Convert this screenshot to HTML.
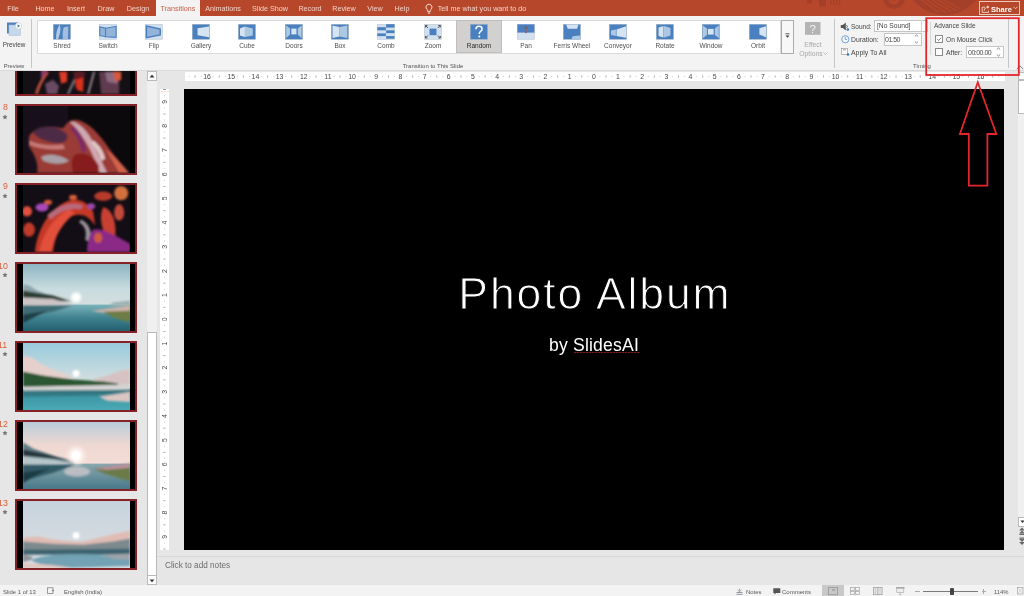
<!DOCTYPE html><html><head><meta charset="utf-8"><style>
*{margin:0;padding:0;box-sizing:border-box}
html,body{width:1024px;height:596px;overflow:hidden;background:#e6e6e6;font-family:"Liberation Sans", sans-serif}
.b{position:absolute}
.t{position:absolute;white-space:nowrap;line-height:1.2;font-family:"Liberation Sans", sans-serif;will-change:transform}
svg{position:absolute;overflow:visible}
</style></head><body>

<div class="b" style="left:0px;top:0px;width:1024px;height:16px;background:#b7472a"></div>
<svg style="left:0;top:0" width="1024" height="16"><g fill="#a4402a"><circle cx="944.5" cy="-25.2" r="40.4"/><circle cx="894" cy="-2.3" r="11.1"/><path d="M806.5 0h6l-1 3.5h-4z"/><path d="M818.5 0h7.5v6.6h-6.5z"/><rect x="830" y="0" width="1.3" height="5"/><rect x="833" y="0" width="1.3" height="5"/><rect x="836" y="0" width="1.3" height="5"/><rect x="839" y="0" width="1.3" height="4.5"/></g><circle cx="894" cy="-1.3" r="5.6" fill="#b7472a"/><circle cx="894" cy="-2.5" r="3" fill="#a4402a"/><g stroke="#b7472a" stroke-width="1.1"><line x1="920" y1="-1" x2="939" y2="12.5"/><line x1="925.5" y1="-1" x2="945.5" y2="12.5"/><line x1="931" y1="-1" x2="951" y2="11.5"/><line x1="936.5" y1="-1" x2="956" y2="10.5"/><line x1="942" y1="-1" x2="960" y2="8.5"/></g></svg>
<div class="t" style="left:-487.15px;width:1000px;text-align:center;top:5.08px;font-size:7.2px;color:#f0d2c8;">File</div>
<div class="t" style="left:-454.6px;width:1000px;text-align:center;top:5.08px;font-size:7.2px;color:#f0d2c8;">Home</div>
<div class="t" style="left:-423.8px;width:1000px;text-align:center;top:5.08px;font-size:7.2px;color:#f0d2c8;">Insert</div>
<div class="t" style="left:-394.0px;width:1000px;text-align:center;top:5.08px;font-size:7.2px;color:#f0d2c8;">Draw</div>
<div class="t" style="left:-362.5px;width:1000px;text-align:center;top:5.08px;font-size:7.2px;color:#f0d2c8;">Design</div>
<div class="t" style="left:-276.8px;width:1000px;text-align:center;top:5.08px;font-size:7.2px;color:#f0d2c8;">Animations</div>
<div class="t" style="left:-230.25px;width:1000px;text-align:center;top:5.08px;font-size:7.2px;color:#f0d2c8;">Slide Show</div>
<div class="t" style="left:-190.14999999999998px;width:1000px;text-align:center;top:5.08px;font-size:7.2px;color:#f0d2c8;">Record</div>
<div class="t" style="left:-156.35000000000002px;width:1000px;text-align:center;top:5.08px;font-size:7.2px;color:#f0d2c8;">Review</div>
<div class="t" style="left:-125.39999999999998px;width:1000px;text-align:center;top:5.08px;font-size:7.2px;color:#f0d2c8;">View</div>
<div class="t" style="left:-97.69999999999999px;width:1000px;text-align:center;top:5.08px;font-size:7.2px;color:#f0d2c8;">Help</div>
<div class="t" style="left:-18.149999999999977px;width:1000px;text-align:center;top:5.08px;font-size:7.2px;color:#f0d2c8;">Tell me what you want to do</div>
<div class="b" style="left:155.5px;top:0px;width:44px;height:16px;background:#f3f3f3"></div>
<div class="t" style="left:-322.5px;width:1000px;text-align:center;top:5.08px;font-size:7.2px;color:#c8604a;">Transitions</div>
<svg style="left:424px;top:3px" width="10" height="12"><path d="M5 1.2a3 3 0 0 1 1.9 5.3c-.5.4-.7.9-.7 1.5v.8H3.8V8c0-.6-.2-1.1-.7-1.5A3 3 0 0 1 5 1.2z" fill="none" stroke="#fbe9e4" stroke-width=".9"/><line x1="4" y1="10.2" x2="6" y2="10.2" stroke="#fbe9e4" stroke-width=".9"/></svg>
<div class="b" style="left:979px;top:1.2px;width:41px;height:13.4px;border:1px solid #f0c9bd"></div>
<svg style="left:981px;top:4px" width="9" height="9"><path d="M4 3.2H1.2v5.2h6.3V6.6" fill="none" stroke="#f6ddd5" stroke-width=".85"/><path d="M3.2 6.6C3.6 4.2 5 3 7 3" fill="none" stroke="#f6ddd5" stroke-width=".85"/><path d="M6.2 1.2L8.4 3 6.2 4.8z" fill="#f6ddd5"/></svg>
<div class="t" style="left:991px;top:4.70px;font-size:7.5px;color:#fff;font-weight:bold">Share</div>
<svg style="left:1013px;top:6px" width="5" height="4"><path d="M.5 .8L2.5 2.8 4.5 .8" fill="none" stroke="#f6ddd5" stroke-width=".8"/></svg>
<div class="b" style="left:0px;top:16px;width:1024px;height:54px;background:#f3f3f3"></div>
<div class="b" style="left:0px;top:70px;width:1024px;height:1px;background:#dadada"></div>
<svg style="left:6px;top:21px" width="18" height="16"><rect x="1" y="1.5" width="11" height="11" fill="#4f81bd"/><rect x="3" y="4" width="11.5" height="10.5" fill="#c5d8ea" stroke="#a9c0d6" stroke-width=".5"/><circle cx="12.5" cy="5" r="3.2" fill="#fff" stroke="#bdbdbd" stroke-width=".5"/><path d="M11.6 3.3l2.6 1.7-2.6 1.7z" fill="#3a8f8f"/></svg>
<div class="t" style="left:-485.9px;width:1000px;text-align:center;top:40.86px;font-size:6.4px;color:#444;">Preview</div>
<div class="t" style="left:-486.2px;width:1000px;text-align:center;top:62.52px;font-size:5.8px;color:#555;">Preview</div>
<div class="b" style="left:31px;top:19.3px;width:1px;height:48.5px;background:#c6c6c6"></div>
<div class="b" style="left:37.3px;top:20.2px;width:744px;height:34px;background:#fff;border:1px solid #d9d9d9"></div>
<div class="b" style="left:455.6px;top:20.4px;width:46px;height:32.2px;background:#d3d0d0;border:1px solid #c1bebe"></div>
<div class="b" style="left:781px;top:20px;width:13.2px;height:33.6px;background:#f7f7f7;border:1px solid #acacac"></div>
<svg style="left:784px;top:33px" width="7" height="6"><line x1="1.5" y1="0.8" x2="5.5" y2="0.8" stroke="#444" stroke-width=".9"/><path d="M1.5 2.5h4l-2 2.3z" fill="#444"/></svg>
<svg style="left:52.6px;top:23.9px" width="17.8" height="15.6" viewBox="0 0 18 15.6" preserveAspectRatio="none"><rect x="0.25" y="0.25" width="17.5" height="15.1" fill="#4a80bf" stroke="#a5b3c2" stroke-width=".5"/><path d="M6.6 .6C8.2 3.5 7.6 8.5 5.2 14.9H3.2C2.8 10.5 3.8 5.5 6.6 .6z" fill="#b4cae4"/><path d="M10.8 3.2L15.6 2.4 15.2 14.9H10C9.4 10.5 9.8 6.5 10.8 3.2z" fill="#9fbbdd"/><path d="M11.5 5h3M11 8h3.5M10.8 11h3.8" stroke="#c8daf0" stroke-width=".6" stroke-dasharray="1 .8"/></svg>
<div class="t" style="left:-438.5px;width:1000px;text-align:center;top:42.40px;font-size:6.5px;color:#505050;">Shred</div>
<svg style="left:99.0px;top:23.9px" width="17.8" height="15.6" viewBox="0 0 18 15.6" preserveAspectRatio="none"><rect x="0.25" y="0.25" width="17.5" height="15.1" fill="#d0e0ef" stroke="#b9c3cc" stroke-width=".5"/><path d="M.8 2.9L6.6 4.3V12.7L.8 11.6z" fill="#93b3d8" stroke="#4a80bf" stroke-width="1.1"/><path d="M6.6 4.3L17.3 2.3V13.4L6.6 12.7z" fill="#93b3d8" stroke="#4a80bf" stroke-width="1.1"/></svg>
<div class="t" style="left:-392.1px;width:1000px;text-align:center;top:42.40px;font-size:6.5px;color:#505050;">Switch</div>
<svg style="left:145.4px;top:23.9px" width="17.8" height="15.6" viewBox="0 0 18 15.6" preserveAspectRatio="none"><rect x="0.25" y="0.25" width="17.5" height="15.1" fill="#d0e0ef" stroke="#b9c3cc" stroke-width=".5"/><path d="M1.4 1.9L15.4 5V10.9L1.4 13.7z" fill="#93b3d8" stroke="#4a80bf" stroke-width="1.5"/></svg>
<div class="t" style="left:-345.7px;width:1000px;text-align:center;top:42.40px;font-size:6.5px;color:#505050;">Flip</div>
<svg style="left:191.8px;top:23.9px" width="17.8" height="15.6" viewBox="0 0 18 15.6" preserveAspectRatio="none"><rect x="0.25" y="0.25" width="17.5" height="15.1" fill="#4a80bf" stroke="#a5b3c2" stroke-width=".5"/><path d="M5.6 4.2L17.4 2.4V13.3L5.6 11.3z" fill="#d6e3f0"/></svg>
<div class="t" style="left:-299.3px;width:1000px;text-align:center;top:42.40px;font-size:6.5px;color:#505050;">Gallery</div>
<svg style="left:238.2px;top:23.9px" width="17.8" height="15.6" viewBox="0 0 18 15.6" preserveAspectRatio="none"><rect x="0.25" y="0.25" width="17.5" height="15.1" fill="#4a80bf" stroke="#a5b3c2" stroke-width=".5"/><path d="M2 4.4L7 2.4V13.1L2 11.4z" fill="#d6e3f0"/><path d="M7 2.4l8 2v7L7 13.1z" fill="#adc8e3"/></svg>
<div class="t" style="left:-252.9px;width:1000px;text-align:center;top:42.40px;font-size:6.5px;color:#505050;">Cube</div>
<svg style="left:284.6px;top:23.9px" width="17.8" height="15.6" viewBox="0 0 18 15.6" preserveAspectRatio="none"><rect x="0.25" y="0.25" width="17.5" height="15.1" fill="#4a80bf" stroke="#a5b3c2" stroke-width=".5"/><path d="M1.2 1.4L5 4.6v6L1.2 13.9z" fill="#adc8e3"/><path d="M16.8 1.4L13 4.6v6l3.8 3.3z" fill="#adc8e3"/><rect x="6.4" y="4.6" width="5.2" height="5.8" fill="#d6e3f0"/></svg>
<div class="t" style="left:-206.5px;width:1000px;text-align:center;top:42.40px;font-size:6.5px;color:#505050;">Doors</div>
<svg style="left:331.0px;top:23.9px" width="17.8" height="15.6" viewBox="0 0 18 15.6" preserveAspectRatio="none"><rect x="0.25" y="0.25" width="17.5" height="15.1" fill="#4a80bf" stroke="#a5b3c2" stroke-width=".5"/><path d="M1.5 1.5L8.5 3v9.6L1.5 14z" fill="#d6e3f0"/><path d="M8.5 3l8-1.5V14l-8-1.4z" fill="#adc8e3"/></svg>
<div class="t" style="left:-160.10000000000002px;width:1000px;text-align:center;top:42.40px;font-size:6.5px;color:#505050;">Box</div>
<svg style="left:377.4px;top:23.9px" width="17.8" height="15.6" viewBox="0 0 18 15.6" preserveAspectRatio="none"><rect x="0.25" y="0.25" width="17.5" height="15.1" fill="#d0e0ef" stroke="#b9c3cc" stroke-width=".5"/><rect x="9.2" y="0.2" width="8.5" height="3.4" fill="#4a80bf"/><rect x="0.3" y="3.2" width="8.7" height="3.1" fill="#4a80bf"/><rect x="9.2" y="6.3" width="8.5" height="2.8" fill="#4a80bf"/><rect x="0.3" y="9.4" width="8.7" height="2.7" fill="#4a80bf"/><rect x="9.2" y="12.1" width="8.5" height="2.6" fill="#4a80bf"/></svg>
<div class="t" style="left:-113.69999999999999px;width:1000px;text-align:center;top:42.40px;font-size:6.5px;color:#505050;">Comb</div>
<svg style="left:423.8px;top:23.9px" width="17.8" height="15.6" viewBox="0 0 18 15.6" preserveAspectRatio="none"><rect x="0.25" y="0.25" width="17.5" height="15.1" fill="#d0e0ef" stroke="#b9c3cc" stroke-width=".5"/><rect x="5.6" y="4.6" width="7" height="6.6" fill="#4a80bf"/><g stroke="#555" stroke-width="1" fill="none"><path d="M1.5 1.5l2.5 2.5M1.5 1.5h2M1.5 1.5v2M16.5 1.5L14 4M16.5 1.5h-2M16.5 1.5v2M1.5 14l2.5-2.5M1.5 14h2M1.5 14v-2M16.5 14L14 11.5M16.5 14h-2M16.5 14v-2"/></g></svg>
<div class="t" style="left:-67.30000000000001px;width:1000px;text-align:center;top:42.40px;font-size:6.5px;color:#505050;">Zoom</div>
<svg style="left:470.2px;top:23.9px" width="17.8" height="15.6" viewBox="0 0 18 15.6" preserveAspectRatio="none"><rect x="0.25" y="0.25" width="17.5" height="15.1" fill="#4a80bf" stroke="#a5b3c2" stroke-width=".5"/><path d="M6 5.3c0-1.9 1.4-3 3.1-3 1.8 0 3.1 1.1 3.1 2.7 0 1.4-.9 2-1.7 2.6-.7.5-1.1 1-1.1 1.9v.6" fill="none" stroke="#fff" stroke-width="1.5"/><circle cx="9.4" cy="12.4" r="1" fill="#fff"/></svg>
<div class="t" style="left:-20.900000000000034px;width:1000px;text-align:center;top:42.40px;font-size:6.5px;color:#2b2b2b;">Random</div>
<svg style="left:516.6px;top:23.9px" width="17.8" height="15.6" viewBox="0 0 18 15.6" preserveAspectRatio="none"><rect x="0.25" y="0.25" width="17.5" height="15.1" fill="#d0e0ef" stroke="#b9c3cc" stroke-width=".5"/><rect x="0.4" y="0.4" width="17.2" height="8.2" fill="#4a80bf"/><path d="M9 1.8l2.6 2.6h-1.8v4.6H8.2V4.4H6.4z" fill="#6a6a6a"/><rect x="8.5" y="4.4" width="1" height="5" fill="#b05a7a"/></svg>
<div class="t" style="left:25.5px;width:1000px;text-align:center;top:42.40px;font-size:6.5px;color:#505050;">Pan</div>
<svg style="left:563.0px;top:23.9px" width="17.8" height="15.6" viewBox="0 0 18 15.6" preserveAspectRatio="none"><rect x="0.25" y="0.25" width="17.5" height="15.1" fill="#4a80bf" stroke="#a5b3c2" stroke-width=".5"/><path d="M3.2 .4h12.5l-1.5 4.4H4.8z" fill="#d6e3f0"/><path d="M8.6 15.3l1.2-3.1 7.8-.6v3.7z" fill="#adc8e3"/></svg>
<div class="t" style="left:71.89999999999998px;width:1000px;text-align:center;top:42.40px;font-size:6.5px;color:#505050;">Ferris Wheel</div>
<svg style="left:609.4px;top:23.9px" width="17.8" height="15.6" viewBox="0 0 18 15.6" preserveAspectRatio="none"><rect x="0.25" y="0.25" width="17.5" height="15.1" fill="#4a80bf" stroke="#a5b3c2" stroke-width=".5"/><path d="M2 6.6l5-1.1v6.4l-5-.9z" fill="#adc8e3"/><path d="M7.6 5.5l9.8-3.3V13.8l-9.8-1.9z" fill="#d6e3f0"/></svg>
<div class="t" style="left:118.29999999999995px;width:1000px;text-align:center;top:42.40px;font-size:6.5px;color:#505050;">Conveyor</div>
<svg style="left:655.8px;top:23.9px" width="17.8" height="15.6" viewBox="0 0 18 15.6" preserveAspectRatio="none"><rect x="0.25" y="0.25" width="17.5" height="15.1" fill="#4a80bf" stroke="#a5b3c2" stroke-width=".5"/><path d="M2.6 3.6L7.6 2v11.5l-5-1.6z" fill="#d6e3f0"/><path d="M8.1 2l6.5 2v7.6l-6.5 2z" fill="#adc8e3"/></svg>
<div class="t" style="left:164.69999999999993px;width:1000px;text-align:center;top:42.40px;font-size:6.5px;color:#505050;">Rotate</div>
<svg style="left:702.2px;top:23.9px" width="17.8" height="15.6" viewBox="0 0 18 15.6" preserveAspectRatio="none"><rect x="0.25" y="0.25" width="17.5" height="15.1" fill="#4a80bf" stroke="#a5b3c2" stroke-width=".5"/><path d="M1 1.4L5 4.5v6.5L1 14z" fill="#adc8e3"/><path d="M17 1.4L13 4.5v6.5l4 3z" fill="#adc8e3"/><rect x="6" y="4.9" width="5.8" height="5.7" fill="#d6e3f0"/></svg>
<div class="t" style="left:211.10000000000002px;width:1000px;text-align:center;top:42.40px;font-size:6.5px;color:#505050;">Window</div>
<svg style="left:748.6px;top:23.9px" width="17.8" height="15.6" viewBox="0 0 18 15.6" preserveAspectRatio="none"><rect x="0.25" y="0.25" width="17.5" height="15.1" fill="#4a80bf" stroke="#a5b3c2" stroke-width=".5"/><path d="M10.5 4.3L17.2 2.3V13.3L10.5 10.6z" fill="#d6e3f0"/></svg>
<div class="t" style="left:257.5px;width:1000px;text-align:center;top:42.40px;font-size:6.5px;color:#505050;">Orbit</div>
<div class="t" style="left:-67px;width:1000px;text-align:center;top:62.50px;font-size:6px;color:#555;">Transition to This Slide</div>
<svg style="left:805px;top:22px" width="16" height="13"><rect width="15.5" height="12.8" fill="#b4b4b4"/><text x="7.8" y="11" font-size="11.5" fill="#f4f4f4" text-anchor="middle" font-family="Liberation Sans">?</text></svg>
<div class="t" style="left:312.5px;width:1000px;text-align:center;top:40.62px;font-size:6.8px;color:#a8a8a8;">Effect</div>
<div class="t" style="left:311px;width:1000px;text-align:center;top:49.72px;font-size:6.8px;color:#a8a8a8;">Options</div>
<svg style="left:823px;top:52px" width="5" height="3"><path d="M.5 .5l2 2 2-2" fill="none" stroke="#a8a8a8" stroke-width=".7"/></svg>
<div class="b" style="left:833.5px;top:19.3px;width:1px;height:48.7px;background:#c6c6c6"></div>
<svg style="left:840px;top:22px" width="10" height="9"><path d="M.8 3h2l3-2.5v8l-3-2.5h-2z" fill="#555"/><path d="M6.5 3a2 2 0 0 1 0 3" fill="none" stroke="#555" stroke-width=".8"/><circle cx="7.8" cy="7.5" r="1.3" fill="#2e75c8"/></svg>
<div class="t" style="left:851px;top:22.70px;font-size:6.5px;color:#444;">Sound:</div>
<div class="b" style="left:874.3px;top:19.5px;width:54px;height:12.1px;background:#fff;border:1px solid #c6c6c6"></div>
<div class="b" style="left:921px;top:19.5px;width:1px;height:12.1px;background:#d4d4d4"></div>
<div class="t" style="left:876.5px;top:22.28px;font-size:6.7px;color:#444;">[No Sound]</div>
<svg style="left:841px;top:35px" width="9" height="9"><circle cx="4.3" cy="4.3" r="3.6" fill="none" stroke="#4f8fd0" stroke-width=".8"/><path d="M4.3 2v2.5h1.8" fill="none" stroke="#4f8fd0" stroke-width=".7"/></svg>
<div class="t" style="left:851px;top:35.82px;font-size:6.8px;color:#444;">Duration:</div>
<div class="b" style="left:883.6px;top:32.6px;width:38px;height:13.1px;background:#fff;border:1px solid #c6c6c6"></div>
<div class="t" style="left:884.8px;top:35.50px;font-size:7px;color:#4a4a4a;letter-spacing:-0.5px">01.50</div>
<svg style="left:914px;top:34px" width="5" height="10"><path d="M.8 2.5l1.7-1.6 1.7 1.6M.8 7.5l1.7 1.6 1.7-1.6" fill="none" stroke="#555" stroke-width=".7"/></svg>
<svg style="left:841px;top:48px" width="9" height="8"><rect x=".5" y=".5" width="6" height="6" fill="#fff" stroke="#8a8a8a" stroke-width=".6"/><rect x="2" y=".5" width="3" height="2" fill="#bbb"/><circle cx="7" cy="6.5" r="1.2" fill="#2e75c8"/></svg>
<div class="t" style="left:851px;top:49.16px;font-size:6.9px;color:#444;">Apply To All</div>
<div class="t" style="left:422px;width:1000px;text-align:center;top:62.50px;font-size:6px;color:#555;">Timing</div>
<div class="b" style="left:930.3px;top:22.3px;width:1px;height:33px;background:#d6d6d6"></div>
<div class="t" style="left:933.5px;top:22.20px;font-size:6.5px;color:#444;">Advance Slide</div>
<div class="b" style="left:935.1px;top:35.1px;width:7.5px;height:7.5px;background:#fff;border:1px solid #8c8c8c"></div>
<svg style="left:936px;top:36px" width="6" height="6"><path d="M1.2 3.2l1.4 1.3L5.1 1.8" fill="none" stroke="#555" stroke-width=".75"/></svg>
<div class="t" style="left:945.7px;top:36.24px;font-size:6.6px;color:#444;">On Mouse Click</div>
<div class="b" style="left:935.1px;top:48.1px;width:7.5px;height:7.6px;background:#fff;border:1px solid #8c8c8c"></div>
<div class="t" style="left:945.7px;top:49.22px;font-size:6.8px;color:#444;">After:</div>
<div class="b" style="left:966.1px;top:45.6px;width:37.7px;height:12.9px;background:#fff;border:1px solid #c6c6c6"></div>
<div class="t" style="left:967.8px;top:48.60px;font-size:7px;color:#4a4a4a;letter-spacing:-0.5px">00:00.00</div>
<svg style="left:996.2px;top:47.3px" width="5" height="10"><path d="M.8 2.5l1.7-1.6 1.7 1.6M.8 7.5l1.7 1.6 1.7-1.6" fill="none" stroke="#555" stroke-width=".7"/></svg>
<div class="b" style="left:1008.3px;top:19px;width:1px;height:48.7px;background:#c6c6c6"></div>
<svg style="left:1016px;top:64.5px" width="8" height="5"><path d="M.8 4l3.2-3 3.2 3" fill="none" stroke="#666" stroke-width=".8"/></svg>
<div class="b" style="left:146.7px;top:71px;width:10px;height:514px;background:#f0f0f0"></div>
<div class="b" style="left:146.7px;top:71px;width:10px;height:9.5px;background:#fff;border:1px solid #b9b9b9"></div>
<svg style="left:149px;top:73.5px" width="6" height="4"><path d="M.5 3.5L3 .8l2.5 2.7z" fill="#333"/></svg>
<div class="b" style="left:146.7px;top:332px;width:10px;height:243.5px;background:#fff;border:1px solid #b9b9b9"></div>
<div class="b" style="left:146.7px;top:575px;width:10px;height:10px;background:#fff;border:1px solid #b9b9b9"></div>
<svg style="left:149px;top:578.5px" width="6" height="4"><path d="M.5 .5L3 3.2l2.5-2.7z" fill="#333"/></svg>
<div class="b" style="left:0;top:71px;width:146px;height:514px;overflow:hidden">
<svg width="0" height="0" style="position:absolute"><filter id="bl" x="-20%" y="-20%" width="140%" height="140%"><feGaussianBlur stdDeviation="0.8"/></filter></svg>
<div class="b" style="left:14.7px;top:-46.2px;width:122.8px;height:71px;border:2px solid #862227;background:#000"></div>
<svg style="left:22.75px;top:-44.2px;overflow:hidden" width="107.2" height="67" viewBox="0 0 107 66" preserveAspectRatio="none"><rect width="107" height="66" fill="#141016"/><g filter="url(#bl)"><path d="M12 66 C14 58 18 50 24 44 L26 45 C21 51 17 58 15 66Z" fill="#c0503a"/><path d="M18 40 C22 36 26 38 24 44 L18 52Z" fill="#8a3a6a"/><path d="M22 56 L30 52 L36 58 L34 66 L24 66Z" fill="#6a4a64"/><path d="M36 44 L44 44 L44 54 L38 56Z" fill="#e03a28"/><path d="M44 66 L54 44 L56 44 L46 66Z" fill="#8a8a90"/><path d="M50 44 L62 44 L60 62 L52 60Z" fill="#5a1a20"/><path d="M52 52 L60 50 L60 64 L54 62Z" fill="#d8301e"/><path d="M64 66 L70 44 L72 44 L66 66Z" fill="#9a8890"/><path d="M76 44 L96 44 L96 66 L78 66Z" fill="#5e3a4e"/><path d="M82 44 L96 44 L94 56 L84 54Z" fill="#8a6a80"/><path d="M90 44 L98 44 L98 52 L92 54Z" fill="#d8583a"/></g></svg>
<div class="b" style="left:14.7px;top:32.8px;width:122.8px;height:71px;border:2px solid #862227;background:#000"></div>
<svg style="left:22.75px;top:34.8px;overflow:hidden" width="107.2" height="67" viewBox="0 0 107 66" preserveAspectRatio="none"><rect width="107" height="66" fill="#0c090d"/><rect width="45" height="66" fill="#17101a"/><g filter="url(#bl)"><path d="M6 30 C10 22 24 18 40 22 C44 16 48 12 56 14 C68 18 78 30 86 42 C94 52 100 60 106 66 L14 66 C16 58 12 48 6 40 Z" fill="#9a3a36"/><path d="M10 26 C16 18 34 18 44 28 C46 34 40 38 30 36 C22 34 14 32 10 26 Z" fill="#4d2c44"/><path d="M46 15 C56 15 66 26 72 40 C76 50 80 58 84 66 L77 66 C73 56 69 46 63 36 C57 26 52 20 46 15Z" fill="#d0a8b0"/><path d="M49 20 C57 24 61 34 63 44 L59 46 C57 36 53 28 47 22Z" fill="#7a2a6a"/><path d="M6 34 C14 38 28 40 40 38 L42 42 C30 44 14 42 6 38Z" fill="#c87a78"/><path d="M18 50 C26 46 38 48 46 54 C40 58 30 58 20 54Z" fill="#a8a0a6"/><path d="M52 48 C62 44 72 50 76 60 L74 66 L50 66 C48 58 48 52 52 48Z" fill="#861c1c"/><path d="M82 42 C90 48 99 57 106 66 L96 66 C92 58 87 50 82 42Z" fill="#d2644c"/><path d="M70 34 C76 38 80 44 82 52 L78 54 C76 46 72 40 68 36Z" fill="#e0c8c8"/></g></svg>
<div class="t" style="left:2.5px;top:31.4px;font-size:8.8px;color:#d9603f">8</div>
<svg style="left:2px;top:42.8px" width="6" height="6"><path d="M3 .5l.8 1.6 1.7.2-1.2 1.2.3 1.7L3 4.4l-1.6.8.3-1.7L.5 2.3l1.7-.2z" fill="#777"/></svg>
<div class="b" style="left:14.7px;top:111.80000000000001px;width:122.8px;height:71px;border:2px solid #862227;background:#000"></div>
<svg style="left:22.75px;top:113.80000000000001px;overflow:hidden" width="107.2" height="67" viewBox="0 0 107 66" preserveAspectRatio="none"><rect width="107" height="66" fill="#130d15"/><g filter="url(#bl)"><path d="M12 66 C14 44 26 24 44 16 C54 12 64 16 70 26 L72 40 C66 30 58 28 50 30 C38 34 32 50 30 66Z" fill="#c43828"/><path d="M16 66 C20 48 30 32 46 24 L52 28 C40 36 32 50 28 66Z" fill="#e2503a"/><path d="M24 30 C34 20 48 16 60 20 L58 24 C48 22 36 26 28 34Z" fill="#b86a7a"/><path d="M58 34 C66 38 70 46 66 56 L62 54 C64 46 62 40 56 37Z" fill="#9a929a"/><ellipse cx="19" cy="22" rx="6.5" ry="4" fill="#a848b8"/><ellipse cx="25" cy="17" rx="4" ry="2.5" fill="#d85a3a"/><ellipse cx="98" cy="8" rx="7" ry="7" fill="#d2703e"/><ellipse cx="80" cy="11" rx="9" ry="4.5" fill="#b83a2c"/><path d="M80 22 C90 24 94 38 92 54 C88 58 84 56 82 50 C78 40 76 30 80 22Z" fill="#c84030"/><ellipse cx="96" cy="27" rx="5" ry="8" fill="#c24a3a"/><path d="M70 44 C80 42 92 50 107 58 L107 66 L64 66 C64 56 66 48 70 44Z" fill="#8a2a86"/><ellipse cx="75" cy="52" rx="4" ry="5" fill="#d05a40"/><ellipse cx="4" cy="26" rx="5" ry="5" fill="#e05040"/><ellipse cx="6" cy="44" rx="6" ry="7" fill="#c03a2a"/><ellipse cx="50" cy="12" rx="4" ry="2.5" fill="#d8603a"/><ellipse cx="68" cy="21" rx="4" ry="3" fill="#9a48a8"/></g></svg>
<div class="t" style="left:2.5px;top:110.4px;font-size:8.8px;color:#d9603f">9</div>
<svg style="left:2px;top:121.80000000000001px" width="6" height="6"><path d="M3 .5l.8 1.6 1.7.2-1.2 1.2.3 1.7L3 4.4l-1.6.8.3-1.7L.5 2.3l1.7-.2z" fill="#777"/></svg>
<div class="b" style="left:14.7px;top:191.2px;width:122.8px;height:71px;border:2px solid #862227;background:#000"></div>
<svg style="left:22.75px;top:193.2px;overflow:hidden" width="107.2" height="67" viewBox="0 0 107 66" preserveAspectRatio="none"><defs><linearGradient id="s10" x1="0" y1="0" x2="0" y2="1"><stop offset="0" stop-color="#8db4c3"/><stop offset=".6" stop-color="#c9dcdf"/><stop offset="1" stop-color="#d4dede"/></linearGradient><linearGradient id="w10" x1="0" y1="0" x2="0" y2="1"><stop offset="0" stop-color="#7ab4bc"/><stop offset=".5" stop-color="#3f8290"/><stop offset="1" stop-color="#245f6e"/></linearGradient><radialGradient id="g10"><stop offset="0" stop-color="#fff"/><stop offset=".35" stop-color="#fff"/><stop offset="1" stop-color="#fff" stop-opacity="0"/></radialGradient></defs><rect width="107" height="41" fill="url(#s10)"/><rect y="40" width="107" height="26" fill="url(#w10)"/><circle cx="53" cy="33" r="7" fill="url(#g10)"/><g filter="url(#bl)"><path d="M0 20 L6 21 L14 26 L24 30 L0 31Z" fill="#8ea6ac"/><path d="M0 26 L12 28 L30 31 L48 37 L0 35Z" fill="#2f3e36"/><path d="M0 33 L30 34.5 L50 40 L0 41Z" fill="#cdc4c6"/><path d="M0 41 L50 41 L30 47 L0 53Z" fill="#3e6c76"/><path d="M0 50 L24 46 L14 51 L0 58Z" fill="#1f3d44"/><path d="M90 38 L107 36 L107 41 L86 41Z" fill="#9cb0b0"/><path d="M68 46 L107 41 L107 47 L80 48Z" fill="#cfb2aa"/><path d="M80 47 L107 46 L107 57 C98 56 88 52 80 47Z" fill="#6e7c44"/></g></svg>
<div class="t" style="left:-2.3px;top:189.79999999999998px;font-size:8.8px;color:#d9603f">10</div>
<svg style="left:2px;top:201.2px" width="6" height="6"><path d="M3 .5l.8 1.6 1.7.2-1.2 1.2.3 1.7L3 4.4l-1.6.8.3-1.7L.5 2.3l1.7-.2z" fill="#777"/></svg>
<div class="b" style="left:14.7px;top:270.2px;width:122.8px;height:71px;border:2px solid #862227;background:#000"></div>
<svg style="left:22.75px;top:272.2px;overflow:hidden" width="107.2" height="67" viewBox="0 0 107 66" preserveAspectRatio="none"><defs><linearGradient id="s11" x1="0" y1="0" x2="0" y2="1"><stop offset="0" stop-color="#99cbdd"/><stop offset="1" stop-color="#e0e3e0"/></linearGradient><linearGradient id="w11" x1="0" y1="0" x2="0" y2="1"><stop offset="0" stop-color="#2f7a88"/><stop offset=".35" stop-color="#3d96a4"/><stop offset="1" stop-color="#4aaab6"/></linearGradient></defs><rect width="107" height="46" fill="url(#s11)"/><rect y="45" width="107" height="21" fill="url(#w11)"/><g filter="url(#bl)"><path d="M0 13 L8 14 L20 22 L35 28 L52 34 L0 36Z" fill="#e6d0cc"/><path d="M70 36 L84 32 L98 27 L107 26 L107 41 L72 41Z" fill="#d6c2c2"/><circle cx="53" cy="30" r="3.5" fill="#fff"/><path d="M0 28 L20 32 L50 36 L80 38 L95 40 L92 44 L0 44Z" fill="#2c5632"/><path d="M0 43 L107 41 L107 46 L0 47Z" fill="#d4d2d2"/><path d="M0 47 L107 46 L107 51 L0 53Z" fill="#2f6e78" opacity=".7"/><path d="M76 53 L107 48 L107 58 L84 57Z" fill="#dcc6c2"/></g></svg>
<div class="t" style="left:-2.3px;top:268.8px;font-size:8.8px;color:#d9603f">11</div>
<svg style="left:2px;top:280.2px" width="6" height="6"><path d="M3 .5l.8 1.6 1.7.2-1.2 1.2.3 1.7L3 4.4l-1.6.8.3-1.7L.5 2.3l1.7-.2z" fill="#777"/></svg>
<div class="b" style="left:14.7px;top:349.2px;width:122.8px;height:71px;border:2px solid #862227;background:#000"></div>
<svg style="left:22.75px;top:351.2px;overflow:hidden" width="107.2" height="67" viewBox="0 0 107 66" preserveAspectRatio="none"><defs><linearGradient id="s12" x1="0" y1="0" x2="0" y2="1"><stop offset="0" stop-color="#b8cdd8"/><stop offset=".55" stop-color="#efd8d2"/><stop offset="1" stop-color="#f4ddd6"/></linearGradient><linearGradient id="w12" x1="0" y1="0" x2="0" y2="1"><stop offset="0" stop-color="#8aa8ae"/><stop offset="1" stop-color="#48788a"/></linearGradient><radialGradient id="g12"><stop offset="0" stop-color="#fff"/><stop offset=".3" stop-color="#fff"/><stop offset="1" stop-color="#fae6e0" stop-opacity="0"/></radialGradient></defs><rect width="107" height="42" fill="url(#s12)"/><rect y="41" width="107" height="25" fill="url(#w12)"/><circle cx="53" cy="33" r="12" fill="url(#g12)"/><g filter="url(#bl)"><path d="M0 20 L10 26 L30 33 L52 41 L0 42Z" fill="#5e7c84"/><path d="M0 27 L20 31 L48 38 L30 36 L0 33Z" fill="#26363a"/><path d="M0 34 L30 37 L52 41 L0 42Z" fill="#b6c6ca"/><path d="M0 42 L52 42 L30 50 L0 58Z" fill="#305a66"/><path d="M0 50 L26 46 L14 52 L0 60Z" fill="#1e3a42"/><ellipse cx="54" cy="49" rx="13" ry="5" fill="#d2cacc" opacity=".75"/><path d="M70 46 L107 41 L107 58 C96 56 84 52 70 46Z" fill="#6a7a48"/><path d="M70 46 L107 41 L107 45 L84 47Z" fill="#c090a0"/></g></svg>
<div class="t" style="left:-2.3px;top:347.8px;font-size:8.8px;color:#d9603f">12</div>
<svg style="left:2px;top:359.2px" width="6" height="6"><path d="M3 .5l.8 1.6 1.7.2-1.2 1.2.3 1.7L3 4.4l-1.6.8.3-1.7L.5 2.3l1.7-.2z" fill="#777"/></svg>
<div class="b" style="left:14.7px;top:428.2px;width:122.8px;height:71px;border:2px solid #862227;background:#000"></div>
<svg style="left:22.75px;top:430.2px;overflow:hidden" width="107.2" height="67" viewBox="0 0 107 66" preserveAspectRatio="none"><defs><linearGradient id="s13" x1="0" y1="0" x2="0" y2="1"><stop offset="0" stop-color="#c6d3dc"/><stop offset="1" stop-color="#dde0e4"/></linearGradient></defs><rect width="107" height="66" fill="url(#s13)"/><circle cx="53" cy="34" r="3.5" fill="#fff" filter="url(#bl)"/><g filter="url(#bl)"><path d="M0 36 L15 35 L30 38 L50 40 L60 40 L85 34 L107 29 L107 46 L0 46Z" fill="#e0bcb4"/><path d="M0 40 L30 42 L60 43 L90 40 L107 37 L107 50 L0 50Z" fill="#7c8a8e"/><path d="M0 48 L107 47 L107 53 L0 53Z" fill="#3e6470"/><path d="M8 58 C20 52 60 50 107 56 L107 64 L40 66 C24 64 14 62 8 58Z" fill="#72a2b4"/><path d="M80 53 L107 52 L107 58 L90 57Z" fill="#a0a4aa"/><path d="M0 61 L30 63 L50 66 L0 66Z" fill="#e0c6c0"/><path d="M0 53 L10 55 L8 58 L0 60Z" fill="#8a9296"/></g></svg>
<div class="t" style="left:-2.3px;top:426.8px;font-size:8.8px;color:#d9603f">13</div>
<svg style="left:2px;top:438.2px" width="6" height="6"><path d="M3 .5l.8 1.6 1.7.2-1.2 1.2.3 1.7L3 4.4l-1.6.8.3-1.7L.5 2.3l1.7-.2z" fill="#777"/></svg>
</div>
<div class="b" style="left:185px;top:72px;width:820px;height:8.6px;background:#fff"></div>
<div class="b" style="left:160.2px;top:88.8px;width:8.4px;height:461.2px;background:#fff"></div>
<div class="b" style="left:163px;top:89.2px;width:3px;height:1px;background:#9a9a9a"></div><div class="b" style="left:160.5px;top:91.2px;width:8px;height:0.8px;background:repeating-linear-gradient(90deg,#f6d4c4 0 2px,transparent 2px 3px)"></div>
<svg style="left:0;top:0" width="1024" height="596"><rect x="188.55" y="76" width="1" height="1" fill="#cfcfcf"/><rect x="194.59" y="75.3" width="1" height="2.4" fill="#b4b4b4"/><rect x="200.64" y="76" width="1" height="1" fill="#cfcfcf"/><text x="207.08" y="79.1" font-size="6.9" fill="#4a4a4a" text-anchor="middle" font-family="Liberation Sans">16</text><rect x="212.72" y="76" width="1" height="1" fill="#cfcfcf"/><rect x="218.76" y="75.3" width="1" height="2.4" fill="#b4b4b4"/><rect x="224.81" y="76" width="1" height="1" fill="#cfcfcf"/><text x="231.25" y="79.1" font-size="6.9" fill="#4a4a4a" text-anchor="middle" font-family="Liberation Sans">15</text><rect x="236.89" y="76" width="1" height="1" fill="#cfcfcf"/><rect x="242.93" y="75.3" width="1" height="2.4" fill="#b4b4b4"/><rect x="248.98" y="76" width="1" height="1" fill="#cfcfcf"/><text x="255.42" y="79.1" font-size="6.9" fill="#4a4a4a" text-anchor="middle" font-family="Liberation Sans">14</text><rect x="261.06" y="76" width="1" height="1" fill="#cfcfcf"/><rect x="267.10" y="75.3" width="1" height="2.4" fill="#b4b4b4"/><rect x="273.15" y="76" width="1" height="1" fill="#cfcfcf"/><text x="279.59" y="79.1" font-size="6.9" fill="#4a4a4a" text-anchor="middle" font-family="Liberation Sans">13</text><rect x="285.23" y="76" width="1" height="1" fill="#cfcfcf"/><rect x="291.27" y="75.3" width="1" height="2.4" fill="#b4b4b4"/><rect x="297.32" y="76" width="1" height="1" fill="#cfcfcf"/><text x="303.76" y="79.1" font-size="6.9" fill="#4a4a4a" text-anchor="middle" font-family="Liberation Sans">12</text><rect x="309.40" y="76" width="1" height="1" fill="#cfcfcf"/><rect x="315.44" y="75.3" width="1" height="2.4" fill="#b4b4b4"/><rect x="321.49" y="76" width="1" height="1" fill="#cfcfcf"/><text x="327.93" y="79.1" font-size="6.9" fill="#4a4a4a" text-anchor="middle" font-family="Liberation Sans">11</text><rect x="333.57" y="76" width="1" height="1" fill="#cfcfcf"/><rect x="339.61" y="75.3" width="1" height="2.4" fill="#b4b4b4"/><rect x="345.66" y="76" width="1" height="1" fill="#cfcfcf"/><text x="352.10" y="79.1" font-size="6.9" fill="#4a4a4a" text-anchor="middle" font-family="Liberation Sans">10</text><rect x="357.74" y="76" width="1" height="1" fill="#cfcfcf"/><rect x="363.78" y="75.3" width="1" height="2.4" fill="#b4b4b4"/><rect x="369.83" y="76" width="1" height="1" fill="#cfcfcf"/><text x="376.27" y="79.1" font-size="6.9" fill="#4a4a4a" text-anchor="middle" font-family="Liberation Sans">9</text><rect x="381.91" y="76" width="1" height="1" fill="#cfcfcf"/><rect x="387.95" y="75.3" width="1" height="2.4" fill="#b4b4b4"/><rect x="394.00" y="76" width="1" height="1" fill="#cfcfcf"/><text x="400.44" y="79.1" font-size="6.9" fill="#4a4a4a" text-anchor="middle" font-family="Liberation Sans">8</text><rect x="406.08" y="76" width="1" height="1" fill="#cfcfcf"/><rect x="412.12" y="75.3" width="1" height="2.4" fill="#b4b4b4"/><rect x="418.17" y="76" width="1" height="1" fill="#cfcfcf"/><text x="424.61" y="79.1" font-size="6.9" fill="#4a4a4a" text-anchor="middle" font-family="Liberation Sans">7</text><rect x="430.25" y="76" width="1" height="1" fill="#cfcfcf"/><rect x="436.29" y="75.3" width="1" height="2.4" fill="#b4b4b4"/><rect x="442.34" y="76" width="1" height="1" fill="#cfcfcf"/><text x="448.78" y="79.1" font-size="6.9" fill="#4a4a4a" text-anchor="middle" font-family="Liberation Sans">6</text><rect x="454.42" y="76" width="1" height="1" fill="#cfcfcf"/><rect x="460.46" y="75.3" width="1" height="2.4" fill="#b4b4b4"/><rect x="466.51" y="76" width="1" height="1" fill="#cfcfcf"/><text x="472.95" y="79.1" font-size="6.9" fill="#4a4a4a" text-anchor="middle" font-family="Liberation Sans">5</text><rect x="478.59" y="76" width="1" height="1" fill="#cfcfcf"/><rect x="484.63" y="75.3" width="1" height="2.4" fill="#b4b4b4"/><rect x="490.68" y="76" width="1" height="1" fill="#cfcfcf"/><text x="497.12" y="79.1" font-size="6.9" fill="#4a4a4a" text-anchor="middle" font-family="Liberation Sans">4</text><rect x="502.76" y="76" width="1" height="1" fill="#cfcfcf"/><rect x="508.80" y="75.3" width="1" height="2.4" fill="#b4b4b4"/><rect x="514.85" y="76" width="1" height="1" fill="#cfcfcf"/><text x="521.29" y="79.1" font-size="6.9" fill="#4a4a4a" text-anchor="middle" font-family="Liberation Sans">3</text><rect x="526.93" y="76" width="1" height="1" fill="#cfcfcf"/><rect x="532.98" y="75.3" width="1" height="2.4" fill="#b4b4b4"/><rect x="539.02" y="76" width="1" height="1" fill="#cfcfcf"/><text x="545.46" y="79.1" font-size="6.9" fill="#4a4a4a" text-anchor="middle" font-family="Liberation Sans">2</text><rect x="551.10" y="76" width="1" height="1" fill="#cfcfcf"/><rect x="557.14" y="75.3" width="1" height="2.4" fill="#b4b4b4"/><rect x="563.19" y="76" width="1" height="1" fill="#cfcfcf"/><text x="569.63" y="79.1" font-size="6.9" fill="#4a4a4a" text-anchor="middle" font-family="Liberation Sans">1</text><rect x="575.27" y="76" width="1" height="1" fill="#cfcfcf"/><rect x="581.31" y="75.3" width="1" height="2.4" fill="#b4b4b4"/><rect x="587.36" y="76" width="1" height="1" fill="#cfcfcf"/><text x="593.80" y="79.1" font-size="6.9" fill="#4a4a4a" text-anchor="middle" font-family="Liberation Sans">0</text><rect x="599.44" y="76" width="1" height="1" fill="#cfcfcf"/><rect x="605.49" y="75.3" width="1" height="2.4" fill="#b4b4b4"/><rect x="611.53" y="76" width="1" height="1" fill="#cfcfcf"/><text x="617.97" y="79.1" font-size="6.9" fill="#4a4a4a" text-anchor="middle" font-family="Liberation Sans">1</text><rect x="623.61" y="76" width="1" height="1" fill="#cfcfcf"/><rect x="629.65" y="75.3" width="1" height="2.4" fill="#b4b4b4"/><rect x="635.70" y="76" width="1" height="1" fill="#cfcfcf"/><text x="642.14" y="79.1" font-size="6.9" fill="#4a4a4a" text-anchor="middle" font-family="Liberation Sans">2</text><rect x="647.78" y="76" width="1" height="1" fill="#cfcfcf"/><rect x="653.82" y="75.3" width="1" height="2.4" fill="#b4b4b4"/><rect x="659.87" y="76" width="1" height="1" fill="#cfcfcf"/><text x="666.31" y="79.1" font-size="6.9" fill="#4a4a4a" text-anchor="middle" font-family="Liberation Sans">3</text><rect x="671.95" y="76" width="1" height="1" fill="#cfcfcf"/><rect x="678.00" y="75.3" width="1" height="2.4" fill="#b4b4b4"/><rect x="684.04" y="76" width="1" height="1" fill="#cfcfcf"/><text x="690.48" y="79.1" font-size="6.9" fill="#4a4a4a" text-anchor="middle" font-family="Liberation Sans">4</text><rect x="696.12" y="76" width="1" height="1" fill="#cfcfcf"/><rect x="702.16" y="75.3" width="1" height="2.4" fill="#b4b4b4"/><rect x="708.21" y="76" width="1" height="1" fill="#cfcfcf"/><text x="714.65" y="79.1" font-size="6.9" fill="#4a4a4a" text-anchor="middle" font-family="Liberation Sans">5</text><rect x="720.29" y="76" width="1" height="1" fill="#cfcfcf"/><rect x="726.33" y="75.3" width="1" height="2.4" fill="#b4b4b4"/><rect x="732.38" y="76" width="1" height="1" fill="#cfcfcf"/><text x="738.82" y="79.1" font-size="6.9" fill="#4a4a4a" text-anchor="middle" font-family="Liberation Sans">6</text><rect x="744.46" y="76" width="1" height="1" fill="#cfcfcf"/><rect x="750.50" y="75.3" width="1" height="2.4" fill="#b4b4b4"/><rect x="756.55" y="76" width="1" height="1" fill="#cfcfcf"/><text x="762.99" y="79.1" font-size="6.9" fill="#4a4a4a" text-anchor="middle" font-family="Liberation Sans">7</text><rect x="768.63" y="76" width="1" height="1" fill="#cfcfcf"/><rect x="774.67" y="75.3" width="1" height="2.4" fill="#b4b4b4"/><rect x="780.72" y="76" width="1" height="1" fill="#cfcfcf"/><text x="787.16" y="79.1" font-size="6.9" fill="#4a4a4a" text-anchor="middle" font-family="Liberation Sans">8</text><rect x="792.80" y="76" width="1" height="1" fill="#cfcfcf"/><rect x="798.85" y="75.3" width="1" height="2.4" fill="#b4b4b4"/><rect x="804.89" y="76" width="1" height="1" fill="#cfcfcf"/><text x="811.33" y="79.1" font-size="6.9" fill="#4a4a4a" text-anchor="middle" font-family="Liberation Sans">9</text><rect x="816.97" y="76" width="1" height="1" fill="#cfcfcf"/><rect x="823.01" y="75.3" width="1" height="2.4" fill="#b4b4b4"/><rect x="829.06" y="76" width="1" height="1" fill="#cfcfcf"/><text x="835.50" y="79.1" font-size="6.9" fill="#4a4a4a" text-anchor="middle" font-family="Liberation Sans">10</text><rect x="841.14" y="76" width="1" height="1" fill="#cfcfcf"/><rect x="847.19" y="75.3" width="1" height="2.4" fill="#b4b4b4"/><rect x="853.23" y="76" width="1" height="1" fill="#cfcfcf"/><text x="859.67" y="79.1" font-size="6.9" fill="#4a4a4a" text-anchor="middle" font-family="Liberation Sans">11</text><rect x="865.31" y="76" width="1" height="1" fill="#cfcfcf"/><rect x="871.36" y="75.3" width="1" height="2.4" fill="#b4b4b4"/><rect x="877.40" y="76" width="1" height="1" fill="#cfcfcf"/><text x="883.84" y="79.1" font-size="6.9" fill="#4a4a4a" text-anchor="middle" font-family="Liberation Sans">12</text><rect x="889.48" y="76" width="1" height="1" fill="#cfcfcf"/><rect x="895.52" y="75.3" width="1" height="2.4" fill="#b4b4b4"/><rect x="901.57" y="76" width="1" height="1" fill="#cfcfcf"/><text x="908.01" y="79.1" font-size="6.9" fill="#4a4a4a" text-anchor="middle" font-family="Liberation Sans">13</text><rect x="913.65" y="76" width="1" height="1" fill="#cfcfcf"/><rect x="919.70" y="75.3" width="1" height="2.4" fill="#b4b4b4"/><rect x="925.74" y="76" width="1" height="1" fill="#cfcfcf"/><text x="932.18" y="79.1" font-size="6.9" fill="#4a4a4a" text-anchor="middle" font-family="Liberation Sans">14</text><rect x="937.82" y="76" width="1" height="1" fill="#cfcfcf"/><rect x="943.87" y="75.3" width="1" height="2.4" fill="#b4b4b4"/><rect x="949.91" y="76" width="1" height="1" fill="#cfcfcf"/><text x="956.35" y="79.1" font-size="6.9" fill="#4a4a4a" text-anchor="middle" font-family="Liberation Sans">15</text><rect x="961.99" y="76" width="1" height="1" fill="#cfcfcf"/><rect x="968.03" y="75.3" width="1" height="2.4" fill="#b4b4b4"/><rect x="974.08" y="76" width="1" height="1" fill="#cfcfcf"/><text x="980.52" y="79.1" font-size="6.9" fill="#4a4a4a" text-anchor="middle" font-family="Liberation Sans">16</text><rect x="986.16" y="76" width="1" height="1" fill="#cfcfcf"/><rect x="992.21" y="75.3" width="1" height="2.4" fill="#b4b4b4"/><rect x="998.25" y="76" width="1" height="1" fill="#cfcfcf"/><rect x="164" y="95.33" width="1" height="1" fill="#cfcfcf"/><text x="0" y="0" transform="translate(164.6 101.77) rotate(-90)" font-size="6.9" fill="#4a4a4a" text-anchor="middle" font-family="Liberation Sans" dy="2.5">9</text><rect x="164" y="107.41" width="1" height="1" fill="#cfcfcf"/><rect x="163.2" y="113.45" width="2.4" height="1" fill="#b4b4b4"/><rect x="164" y="119.50" width="1" height="1" fill="#cfcfcf"/><text x="0" y="0" transform="translate(164.6 125.94) rotate(-90)" font-size="6.9" fill="#4a4a4a" text-anchor="middle" font-family="Liberation Sans" dy="2.5">8</text><rect x="164" y="131.58" width="1" height="1" fill="#cfcfcf"/><rect x="163.2" y="137.62" width="2.4" height="1" fill="#b4b4b4"/><rect x="164" y="143.67" width="1" height="1" fill="#cfcfcf"/><text x="0" y="0" transform="translate(164.6 150.11) rotate(-90)" font-size="6.9" fill="#4a4a4a" text-anchor="middle" font-family="Liberation Sans" dy="2.5">7</text><rect x="164" y="155.75" width="1" height="1" fill="#cfcfcf"/><rect x="163.2" y="161.79" width="2.4" height="1" fill="#b4b4b4"/><rect x="164" y="167.84" width="1" height="1" fill="#cfcfcf"/><text x="0" y="0" transform="translate(164.6 174.28) rotate(-90)" font-size="6.9" fill="#4a4a4a" text-anchor="middle" font-family="Liberation Sans" dy="2.5">6</text><rect x="164" y="179.92" width="1" height="1" fill="#cfcfcf"/><rect x="163.2" y="185.97" width="2.4" height="1" fill="#b4b4b4"/><rect x="164" y="192.01" width="1" height="1" fill="#cfcfcf"/><text x="0" y="0" transform="translate(164.6 198.45) rotate(-90)" font-size="6.9" fill="#4a4a4a" text-anchor="middle" font-family="Liberation Sans" dy="2.5">5</text><rect x="164" y="204.09" width="1" height="1" fill="#cfcfcf"/><rect x="163.2" y="210.13" width="2.4" height="1" fill="#b4b4b4"/><rect x="164" y="216.18" width="1" height="1" fill="#cfcfcf"/><text x="0" y="0" transform="translate(164.6 222.62) rotate(-90)" font-size="6.9" fill="#4a4a4a" text-anchor="middle" font-family="Liberation Sans" dy="2.5">4</text><rect x="164" y="228.26" width="1" height="1" fill="#cfcfcf"/><rect x="163.2" y="234.31" width="2.4" height="1" fill="#b4b4b4"/><rect x="164" y="240.35" width="1" height="1" fill="#cfcfcf"/><text x="0" y="0" transform="translate(164.6 246.79) rotate(-90)" font-size="6.9" fill="#4a4a4a" text-anchor="middle" font-family="Liberation Sans" dy="2.5">3</text><rect x="164" y="252.43" width="1" height="1" fill="#cfcfcf"/><rect x="163.2" y="258.48" width="2.4" height="1" fill="#b4b4b4"/><rect x="164" y="264.52" width="1" height="1" fill="#cfcfcf"/><text x="0" y="0" transform="translate(164.6 270.96) rotate(-90)" font-size="6.9" fill="#4a4a4a" text-anchor="middle" font-family="Liberation Sans" dy="2.5">2</text><rect x="164" y="276.60" width="1" height="1" fill="#cfcfcf"/><rect x="163.2" y="282.65" width="2.4" height="1" fill="#b4b4b4"/><rect x="164" y="288.69" width="1" height="1" fill="#cfcfcf"/><text x="0" y="0" transform="translate(164.6 295.13) rotate(-90)" font-size="6.9" fill="#4a4a4a" text-anchor="middle" font-family="Liberation Sans" dy="2.5">1</text><rect x="164" y="300.77" width="1" height="1" fill="#cfcfcf"/><rect x="163.2" y="306.82" width="2.4" height="1" fill="#b4b4b4"/><rect x="164" y="312.86" width="1" height="1" fill="#cfcfcf"/><text x="0" y="0" transform="translate(164.6 319.30) rotate(-90)" font-size="6.9" fill="#4a4a4a" text-anchor="middle" font-family="Liberation Sans" dy="2.5">0</text><rect x="164" y="324.94" width="1" height="1" fill="#cfcfcf"/><rect x="163.2" y="330.99" width="2.4" height="1" fill="#b4b4b4"/><rect x="164" y="337.03" width="1" height="1" fill="#cfcfcf"/><text x="0" y="0" transform="translate(164.6 343.47) rotate(-90)" font-size="6.9" fill="#4a4a4a" text-anchor="middle" font-family="Liberation Sans" dy="2.5">1</text><rect x="164" y="349.11" width="1" height="1" fill="#cfcfcf"/><rect x="163.2" y="355.16" width="2.4" height="1" fill="#b4b4b4"/><rect x="164" y="361.20" width="1" height="1" fill="#cfcfcf"/><text x="0" y="0" transform="translate(164.6 367.64) rotate(-90)" font-size="6.9" fill="#4a4a4a" text-anchor="middle" font-family="Liberation Sans" dy="2.5">2</text><rect x="164" y="373.28" width="1" height="1" fill="#cfcfcf"/><rect x="163.2" y="379.33" width="2.4" height="1" fill="#b4b4b4"/><rect x="164" y="385.37" width="1" height="1" fill="#cfcfcf"/><text x="0" y="0" transform="translate(164.6 391.81) rotate(-90)" font-size="6.9" fill="#4a4a4a" text-anchor="middle" font-family="Liberation Sans" dy="2.5">3</text><rect x="164" y="397.45" width="1" height="1" fill="#cfcfcf"/><rect x="163.2" y="403.50" width="2.4" height="1" fill="#b4b4b4"/><rect x="164" y="409.54" width="1" height="1" fill="#cfcfcf"/><text x="0" y="0" transform="translate(164.6 415.98) rotate(-90)" font-size="6.9" fill="#4a4a4a" text-anchor="middle" font-family="Liberation Sans" dy="2.5">4</text><rect x="164" y="421.62" width="1" height="1" fill="#cfcfcf"/><rect x="163.2" y="427.67" width="2.4" height="1" fill="#b4b4b4"/><rect x="164" y="433.71" width="1" height="1" fill="#cfcfcf"/><text x="0" y="0" transform="translate(164.6 440.15) rotate(-90)" font-size="6.9" fill="#4a4a4a" text-anchor="middle" font-family="Liberation Sans" dy="2.5">5</text><rect x="164" y="445.79" width="1" height="1" fill="#cfcfcf"/><rect x="163.2" y="451.84" width="2.4" height="1" fill="#b4b4b4"/><rect x="164" y="457.88" width="1" height="1" fill="#cfcfcf"/><text x="0" y="0" transform="translate(164.6 464.32) rotate(-90)" font-size="6.9" fill="#4a4a4a" text-anchor="middle" font-family="Liberation Sans" dy="2.5">6</text><rect x="164" y="469.96" width="1" height="1" fill="#cfcfcf"/><rect x="163.2" y="476.01" width="2.4" height="1" fill="#b4b4b4"/><rect x="164" y="482.05" width="1" height="1" fill="#cfcfcf"/><text x="0" y="0" transform="translate(164.6 488.49) rotate(-90)" font-size="6.9" fill="#4a4a4a" text-anchor="middle" font-family="Liberation Sans" dy="2.5">7</text><rect x="164" y="494.13" width="1" height="1" fill="#cfcfcf"/><rect x="163.2" y="500.18" width="2.4" height="1" fill="#b4b4b4"/><rect x="164" y="506.22" width="1" height="1" fill="#cfcfcf"/><text x="0" y="0" transform="translate(164.6 512.66) rotate(-90)" font-size="6.9" fill="#4a4a4a" text-anchor="middle" font-family="Liberation Sans" dy="2.5">8</text><rect x="164" y="518.30" width="1" height="1" fill="#cfcfcf"/><rect x="163.2" y="524.35" width="2.4" height="1" fill="#b4b4b4"/><rect x="164" y="530.39" width="1" height="1" fill="#cfcfcf"/><text x="0" y="0" transform="translate(164.6 536.83) rotate(-90)" font-size="6.9" fill="#4a4a4a" text-anchor="middle" font-family="Liberation Sans" dy="2.5">9</text><rect x="164" y="542.47" width="1" height="1" fill="#cfcfcf"/><rect x="163.2" y="548.51" width="2.4" height="1" fill="#b4b4b4"/></svg>
<div class="b" style="left:184.2px;top:89px;width:820px;height:461px;background:#000"></div>
<div class="t" style="left:94.20000000000005px;width:1000px;text-align:center;top:266.70px;font-size:44.5px;color:#fff;letter-spacing:1.9px;text-indent:1.9px;-webkit-text-stroke:1px #000">Photo Album</div>
<div class="t" style="left:94.29999999999995px;width:1000px;text-align:center;top:334.74px;font-size:17.6px;color:#fff;letter-spacing:0.2px">by SlidesAI</div>
<div class="b" style="left:574px;top:351.6px;width:66px;height:1px;background:repeating-linear-gradient(90deg,#7a1a1a 0 2px,#3a0c0c 2px 3px)"></div>
<div class="b" style="left:1017.5px;top:72px;width:6.5px;height:445px;background:#f0f0f0"></div>
<div class="b" style="left:1017.5px;top:72px;width:8px;height:8px;background:#fff;border:1px solid #b9b9b9"></div>
<div class="b" style="left:1017.5px;top:80px;width:8px;height:33.5px;background:#fff;border:1px solid #b9b9b9"></div>
<div class="b" style="left:1017.5px;top:517px;width:8px;height:9.5px;background:#fff;border:1px solid #b9b9b9"></div>
<svg style="left:1019.5px;top:520px" width="5" height="4"><path d="M.3 .5h4.4L2.5 3z" fill="#333"/></svg>
<svg style="left:1018.5px;top:527px" width="6" height="19"><path d="M3 .5L5.8 3.5H.2z M3 3.5L5.8 6.5H.2z" fill="#666"/><rect x=".5" y="6.8" width="5" height="1.2" fill="#666"/><rect x=".5" y="10.5" width="5" height="1.2" fill="#666"/><path d="M3 18L5.8 15H.2z M3 15L5.8 12H.2z" fill="#666"/></svg>
<div class="b" style="left:157px;top:556px;width:867px;height:1px;background:#dadada"></div>
<div class="t" style="left:164.5px;top:561.08px;font-size:8.2px;color:#6b6b6b;">Click to add notes</div>
<div class="b" style="left:0px;top:585.4px;width:1024px;height:10.6px;background:#f3f3f3"></div>
<div class="t" style="left:2.6px;top:588.56px;font-size:5.9px;color:#5a5a5a;">Slide 1 of 13</div>
<svg style="left:47px;top:587px" width="8" height="8"><rect x=".5" y=".8" width="5.5" height="5.8" fill="none" stroke="#777" stroke-width=".7"/><path d="M5 3.5l2 0M6 2.5v2" stroke="#777" stroke-width=".7"/></svg>
<div class="t" style="left:63.9px;top:588.53px;font-size:5.95px;color:#5a5a5a;">English (India)</div>
<svg style="left:736px;top:587.5px" width="7" height="8"><path d="M3.5 .5v3M1.5 2l2 1.5 2-1.5" fill="none" stroke="#888" stroke-width=".7"/><rect x=".5" y="4" width="6" height="1.2" fill="#999"/><rect x=".5" y="6" width="6" height="1" fill="#9ab"/></svg>
<div class="t" style="left:745.6px;top:588.76px;font-size:5.9px;color:#5a5a5a;">Notes</div>
<svg style="left:772.8px;top:587.8px" width="8" height="8"><path d="M.3 .3h7v4.7H3L1.5 6.8V5H.3z" fill="#555"/></svg>
<div class="t" style="left:781.8px;top:588.70px;font-size:6.0px;color:#5a5a5a;">Comments</div>
<div class="b" style="left:821.8px;top:585.4px;width:22px;height:10.6px;background:#c8c8c8"></div>
<svg style="left:827.5px;top:587.3px" width="10" height="8"><rect x=".5" y=".5" width="9" height="7.2" fill="none" stroke="#9a9a9a" stroke-width=".8"/><rect x="4" y="2" width="3" height="2" fill="#aaa"/></svg>
<svg style="left:850.3px;top:587.3px" width="10" height="8"><rect x=".5" y=".5" width="4" height="3" fill="none" stroke="#a4a4a4" stroke-width=".7"/><rect x="5.5" y=".5" width="4" height="3" fill="none" stroke="#a4a4a4" stroke-width=".7"/><rect x=".5" y="4.5" width="4" height="3" fill="none" stroke="#a4a4a4" stroke-width=".7"/><rect x="5.5" y="4.5" width="4" height="3" fill="none" stroke="#a4a4a4" stroke-width=".7"/></svg>
<svg style="left:873px;top:587.3px" width="10" height="8"><rect x=".5" y=".5" width="8.6" height="7.2" fill="#e4e4e4" stroke="#a4a4a4" stroke-width=".8"/><line x1="4.8" y1=".5" x2="4.8" y2="7.7" stroke="#a4a4a4" stroke-width=".7"/><line x1="2.6" y1=".5" x2="2.6" y2="7.7" stroke="#bbb" stroke-width=".5"/><line x1="7" y1=".5" x2="7" y2="7.7" stroke="#bbb" stroke-width=".5"/></svg>
<svg style="left:896px;top:587px" width="9" height="9"><rect x="0" y=".3" width="8.6" height="1" fill="#888"/><rect x=".8" y="1.3" width="7" height="4.2" fill="#eee" stroke="#a4a4a4" stroke-width=".6"/><path d="M4.3 5.5v2.5M3 8.3l1.3-1.3 1.3 1.3" fill="none" stroke="#a4a4a4" stroke-width=".6"/></svg>
<div class="b" style="left:915px;top:591px;width:4.5px;height:0.8px;background:#aaa"></div>
<div class="b" style="left:922.8px;top:591px;width:55.7px;height:1px;background:#7a7a7a"></div>
<div class="b" style="left:950px;top:588px;width:3.7px;height:6.8px;background:#444;border-radius:1px"></div>
<div class="b" style="left:981.8px;top:591px;width:4px;height:0.8px;background:#aaa"></div>
<div class="b" style="left:983.4px;top:589.2px;width:0.8px;height:4.4px;background:#aaa"></div>
<div class="t" style="left:993.5px;top:588.82px;font-size:5.8px;color:#5a5a5a;">114%</div>
<svg style="left:1017px;top:587px" width="7" height="8"><rect x=".5" y=".5" width="5.5" height="6.5" fill="none" stroke="#999" stroke-width=".6"/><path d="M1 1l4.5 5.5M5.5 1L1 6.5" stroke="#bbb" stroke-width=".5"/></svg>
<svg style="left:0;top:0" width="1024" height="596"><rect x="926.2" y="18.2" width="92.6" height="56.8" fill="none" stroke="#e3262a" stroke-width="1.8"/><path d="M977.8 82.3L996.3 134H987.4V185.7H968.8V134H959.9Z" fill="none" stroke="#e3262a" stroke-width="1.8" stroke-linejoin="miter"/></svg>
</body></html>
